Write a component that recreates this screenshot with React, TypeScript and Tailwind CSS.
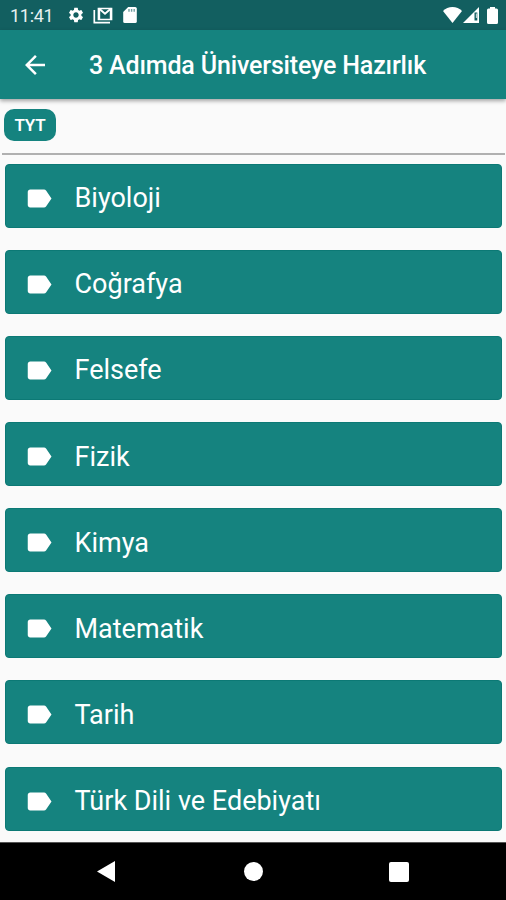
import React from "react";

const lessons = [
  "Biyoloji",
  "Coğrafya",
  "Felsefe",
  "Fizik",
  "Kimya",
  "Matematik",
  "Tarih",
  "Türk Dili ve Edebiyatı",
];

function StatusBar() {
  return (
    <div className="flex h-[30px] shrink-0 items-center bg-[#125f60] pl-[10px] pr-[8px] text-white">
      <span className="w-[43px] whitespace-nowrap pt-[2px] text-[18px] leading-none tracking-[-0.3px] text-[#e6f0f0]">11:41</span>
      <svg className="ml-[14px] size-[18px]" viewBox="0 0 24 24" fill="currentColor">
        <path d="M19.14 12.94c.04-.3.06-.61.06-.94 0-.32-.02-.64-.07-.94l2.03-1.58a.49.49 0 0 0 .12-.61l-1.92-3.32a.488.488 0 0 0-.59-.22l-2.39.96c-.5-.38-1.03-.7-1.62-.94l-.36-2.54a.484.484 0 0 0-.48-.41h-3.84c-.24 0-.43.17-.47.41l-.36 2.54c-.59.24-1.13.57-1.62.94l-2.39-.96c-.22-.08-.47 0-.59.22L2.74 8.87c-.12.21-.08.47.12.61l2.03 1.58c-.05.3-.09.63-.09.94s.02.64.07.94l-2.03 1.58a.49.49 0 0 0-.12.61l1.92 3.32c.12.22.37.29.59.22l2.39-.96c.5.38 1.03.7 1.62.94l.36 2.54c.05.24.24.41.48.41h3.84c.24 0 .44-.17.47-.41l.36-2.54c.59-.24 1.13-.56 1.62-.94l2.39.96c.22.08.47 0 .59-.22l1.92-3.32c.12-.22.07-.47-.12-.61l-2.01-1.58zM12 15.6c-1.98 0-3.6-1.62-3.6-3.6s1.62-3.6 3.6-3.6 3.6 1.62 3.6 3.6-1.62 3.6-3.6 3.6z" />
      </svg>
      <svg className="ml-[8px] h-[17px] w-[20px]" viewBox="0 0 20 17" fill="none" stroke="currentColor">
        <path d="M1.3 3v12.700H17" strokeWidth="1.7" />
        <path d="M5.400 12.500V1.400h13.200v11.100z" strokeWidth="1.500" />
        <path d="M6 1.500l6 5.200 6-5.200" strokeWidth="1.900" />
        <path d="M6.100 2v10.500M17.900 2v10.500" strokeWidth="2.200" />
      </svg>
      <svg className="ml-[10px] h-[16px] w-[14px]" viewBox="0 0 14 16">
        <path fill="currentColor" d="M5.200 0h7A1.600 1.600 0 0 1 13.800 1.600v12.800a1.600 1.600 0 0 1-1.600 1.600H1.800a1.600 1.600 0 0 1-1.600-1.600V5z" />
        <path fill="#125f60" fillOpacity="0.6" d="M5.300 2h1.400v2.800H5.300zM7.900 2h1.400v2.800H7.900zM10.500 2h1.400v2.800h-1.400z" />
      </svg>
      <svg className="ml-auto h-[16px] w-[19px]" viewBox="0 0 19 16" fill="currentColor">
        <path d="M9.500 16 0 4.100C2.500 1.400 5.800 0 9.500 0S16.500 1.400 19 4.100z" />
      </svg>
      <svg className="ml-[1px] h-[16px] w-[16px]" viewBox="0 0 16 16">
        <path fill="currentColor" d="M0 16 16 0v16z" />
        <path fill="#125f60" d="M11.500 5.500h2.800v8h-2.800z" />
        <path fill="currentColor" d="M12.900 6.500h.8v4.500h-.8z" />
      </svg>
      <svg className="ml-[8px] h-[17px] w-[11px]" viewBox="0 0 11 17" fill="currentColor">
        <path d="M3 0h5v1.500h1.500A1.500 1.500 0 0 1 11 3v12.500A1.500 1.500 0 0 1 9.500 17h-8A1.500 1.500 0 0 1 0 15.500V3a1.500 1.500 0 0 1 1.500-1.500H3z" />
      </svg>
    </div>
  );
}

export default function App() {
  return (
    <div className="flex h-[900px] w-[506px] flex-col overflow-hidden bg-[#fafafa] font-['Roboto',sans-serif]">
      <StatusBar />
      <header className="z-10 flex h-[69px] shrink-0 items-center bg-[#15837f] pl-[20px] text-white shadow-[0_2px_4px_rgba(0,0,0,0.35)]">
        <svg className="size-[30px]" viewBox="0 0 24 24" fill="currentColor">
          <path d="M20 11H7.830l5.590-5.590L12 4l-8 8 8 8 1.410-1.410L7.830 13H20v-2z" />
        </svg>
        <h1 className="ml-[39px] whitespace-nowrap pt-[2px] text-[25px] font-medium leading-none tracking-[-0.16px]">3 Adımda Üniversiteye Hazırlık</h1>
      </header>
      <main className="min-h-0 flex-1">
        <div className="flex h-[54px] items-start pl-[4px] pt-[10px]">
          <span className="flex h-[32px] w-[52px] items-center justify-center rounded-[10px] bg-[#15837f] pt-px text-[17px] font-semibold tracking-[-0.2px] text-white">TYT</span>
        </div>
        <hr className="ml-[2px] mr-[1px] h-[2px] border-0 bg-[#b0b0b0]" />
        <ul className="flex flex-col gap-[22.150px] pl-[5px] pr-[4px] pt-[8.600px]">
          {lessons.map((lesson) => (
            <li key={lesson} className="flex h-[64px] shrink-0 items-center rounded-[4px] border border-[#0c7975] bg-[#15837f] pl-[18px] pt-[5px] text-white">
              <svg className="h-[31px] w-[30px]" viewBox="0 0 24 24" preserveAspectRatio="none" fill="currentColor">
                <path d="M17.630 5.840C17.270 5.330 16.670 5 16 5L5 5.010C3.900 5.010 3 5.900 3 7v10c0 1.100.9 1.990 2 1.990L16 19c.67 0 1.270-.33 1.630-.84L22 12l-4.370-6.160z" />
              </svg>
              <span className="ml-[20.500px] whitespace-nowrap pt-px text-[27px] leading-none">{lesson}</span>
            </li>
          ))}
        </ul>
      </main>
      <nav className="flex h-[58px] shrink-0 items-center border-t border-[#555] bg-black text-white">
        <svg className="ml-[97px] h-[21px] w-[18px]" viewBox="0 0 18 21" fill="currentColor">
          <path d="M18 0v21L0 10.500z" />
        </svg>
        <span className="ml-[129px] size-[19px] rounded-full bg-white" />
        <span className="ml-[126px] size-[20px] rounded-[2px] bg-white" />
      </nav>
    </div>
  );
}
